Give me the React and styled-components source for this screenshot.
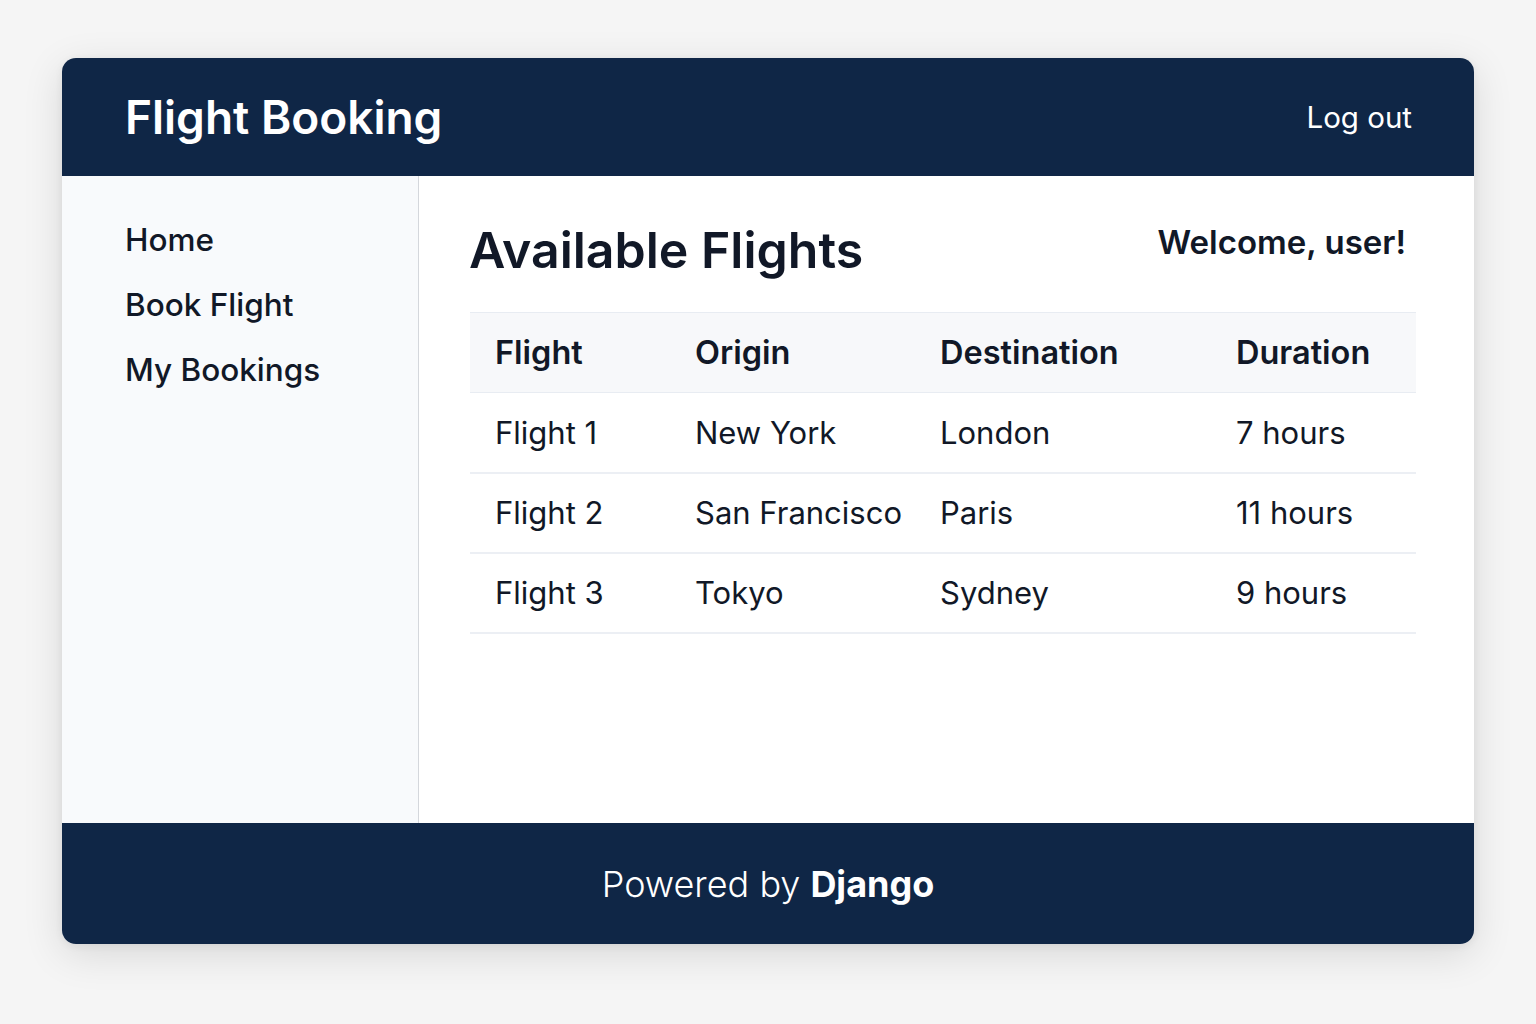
import React from "react";
import styled, { createGlobalStyle } from "styled-components";

const Global = createGlobalStyle`
  html, body { margin: 0; padding: 0; background: #f5f5f5; }
  body { font-family: Inter, "Noto Sans", "Liberation Sans", sans-serif; color: #111827; }
  * { box-sizing: border-box; }
`;

const Page = styled.div`
  width: 1536px;
  height: 1024px;
  padding: 58px 62px 0 62px;
`;

const Card = styled.div`
  width: 1412px;
  height: 886px;
  border-radius: 14px;
  overflow: hidden;
  display: flex;
  flex-direction: column;
  background: #ffffff;
  box-shadow: 0 10px 40px rgba(0, 0, 0, 0.12), 0 2px 8px rgba(0, 0, 0, 0.06);
`;

const Header = styled.header`
  height: 118px;
  flex: none;
  background: #0f2646;
  display: flex;
  align-items: center;
  justify-content: space-between;
  padding: 0 62px 0 63px;
  color: #ffffff;
`;

const Brand = styled.h1`
  margin: 0;
  font-size: 46px;
  font-weight: 600;
`;

const Logout = styled.a`
  font-size: 29.5px;
  font-weight: 400;
  color: #ffffff;
  text-decoration: none;
`;

const Body = styled.div`
  flex: 1;
  display: flex;
  min-height: 0;
`;

const Sidebar = styled.nav`
  width: 357px;
  flex: none;
  background: #f8fafc;
  border-right: 1px solid #d4d7dc;
  padding: 44px 0 0 63px;
  display: flex;
  flex-direction: column;
  gap: 26px;
`;

const NavLink = styled.a`
  font-size: 31.5px;
  font-weight: 500;
  color: #111827;
  text-decoration: none;
  line-height: 39px;
`;

const Main = styled.main`
  flex: 1;
  padding: 34px 58px 0 51px;
`;

const TitleRow = styled.div`
  display: flex;
  justify-content: space-between;
  align-items: flex-start;
  height: 102px;
`;

const Title = styled.h2`
  margin: 0 0 0 -1px;
  font-size: 50px;
  font-weight: 600;
  line-height: 80px;
  color: #111827;
`;

const Welcome = styled.div`
  font-size: 33px;
  font-weight: 600;
  line-height: 64px;
  color: #111827;
  margin-right: 10px;
`;

const Table = styled.table`
  width: 946px;
  border-collapse: collapse;
  table-layout: fixed;
`;

const Th = styled.th`
  text-align: left;
  font-size: 32.5px;
  font-weight: 600;
  height: 80px;
  padding: 0 0 0 25px;
  background: #f7f8fa;
  border-top: 1px solid #e8ecf2;
  border-bottom: 1px solid #e8ecf2;
  color: #111827;
`;

const Td = styled.td`
  font-size: 31px;
  font-weight: 400;
  height: 80px;
  padding: 0 0 0 25px;
  border-bottom: 2px solid #eceff4;
  color: #111827;
  white-space: nowrap;
`;

const Footer = styled.footer`
  height: 121px;
  flex: none;
  background: #0f2646;
  display: flex;
  align-items: center;
  justify-content: center;
  color: #ffffff;
  font-size: 36px;
  font-weight: 300;
`;

const Strong = styled.b`
  font-weight: 700;
  margin-left: 10px;
`;

const flights = [
  ["Flight 1", "New York", "London", "7 hours"],
  ["Flight 2", "San Francisco", "Paris", "11 hours"],
  ["Flight 3", "Tokyo", "Sydney", "9 hours"],
];

export default function App() {
  return (
    <>
      <Global />
      <Page>
        <Card>
          <Header>
            <Brand>Flight Booking</Brand>
            <Logout href="#">Log out</Logout>
          </Header>
          <Body>
            <Sidebar>
              <NavLink href="#">Home</NavLink>
              <NavLink href="#">Book Flight</NavLink>
              <NavLink href="#">My Bookings</NavLink>
            </Sidebar>
            <Main>
              <TitleRow>
                <Title>Available Flights</Title>
                <Welcome>Welcome, user!</Welcome>
              </TitleRow>
              <Table>
                <colgroup>
                  <col style={{ width: 200 }} />
                  <col style={{ width: 245 }} />
                  <col style={{ width: 296 }} />
                  <col style={{ width: 205 }} />
                </colgroup>
                <thead>
                  <tr>
                    <Th>Flight</Th>
                    <Th>Origin</Th>
                    <Th>Destination</Th>
                    <Th>Duration</Th>
                  </tr>
                </thead>
                <tbody>
                  {flights.map((r) => (
                    <tr key={r[0]}>
                      {r.map((c) => (
                        <Td key={c}>{c}</Td>
                      ))}
                    </tr>
                  ))}
                </tbody>
              </Table>
            </Main>
          </Body>
          <Footer>
            Powered by<Strong>Django</Strong>
          </Footer>
        </Card>
      </Page>
    </>
  );
}
